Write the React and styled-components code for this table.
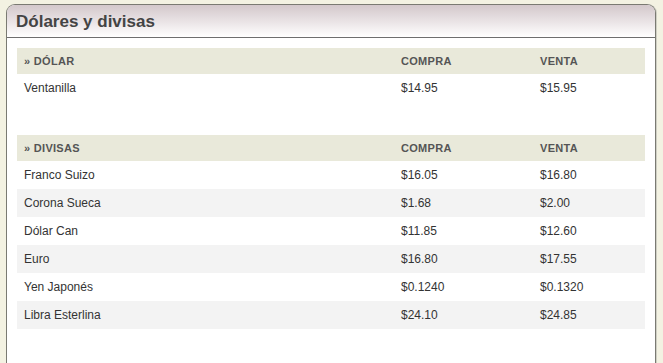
import styled, { createGlobalStyle } from "styled-components";

const GlobalStyle = createGlobalStyle`
  html, body {
    margin: 0;
    padding: 0;
    background: #f3f2e2;
    font-family: "Liberation Sans", Arial, sans-serif;
  }
`;

const dolar = [{ name: "Ventanilla", compra: "$14.95", venta: "$15.95" }];

const divisas = [
  { name: "Franco Suizo", compra: "$16.05", venta: "$16.80" },
  { name: "Corona Sueca", compra: "$1.68", venta: "$2.00" },
  { name: "Dólar Can", compra: "$11.85", venta: "$12.60" },
  { name: "Euro", compra: "$16.80", venta: "$17.55" },
  { name: "Yen Japonés", compra: "$0.1240", venta: "$0.1320" },
  { name: "Libra Esterlina", compra: "$24.10", venta: "$24.85" },
];

const RateTable = ({ title, rows }) => (
  <Table>
    <colgroup>
      <col style={{ width: 377 }} />
      <col style={{ width: 139 }} />
      <col />
    </colgroup>
    <thead>
      <tr>
        <Th>» {title}</Th>
        <Th>COMPRA</Th>
        <Th>VENTA</Th>
      </tr>
    </thead>
    <tbody>
      {rows.map((r, i) => (
        <Row key={r.name} $alt={i % 2 === 1}>
          <Td>{r.name}</Td>
          <Td>{r.compra}</Td>
          <Td>{r.venta}</Td>
        </Row>
      ))}
    </tbody>
  </Table>
);

export default function App() {
  return (
    <>
      <GlobalStyle />
      <Page>
        <Panel>
          <TitleBar>
            <Title>Dólares y divisas</Title>
          </TitleBar>
          <Body>
            <RateTable title="DÓLAR" rows={dolar} />
            <RateTable title="DIVISAS" rows={divisas} />
          </Body>
        </Panel>
      </Page>
    </>
  );
}

const Page = styled.div`
  padding: 4px 7px 0 6px;
  height: 363px;
  box-sizing: border-box;
  overflow: hidden;
`;

const Panel = styled.div`
  background: #fff;
  border: 1px solid #7a7a72;
  border-bottom: none;
  border-radius: 9px 9px 0 0;
  height: 380px;
  box-shadow: 1px 0 0 #cfcfc4;
`;

const TitleBar = styled.div`
  height: 32px;
  border-bottom: 1px solid #6e6e6e;
  border-radius: 8px 8px 0 0;
  background: linear-gradient(to bottom, #d3c8cb 0%, #ebe5e7 55%, #ffffff 100%);
  display: flex;
  align-items: center;
  padding-left: 9px;
`;

const Title = styled.h2`
  margin: 0;
  font-size: 17px;
  font-weight: bold;
  color: #444;
  padding-top: 1px;
`;

const Body = styled.div`
  padding: 10px 10px 0 10px;
  display: flex;
  flex-direction: column;
  gap: 33px;
`;

const Table = styled.table`
  width: 628px;
  border-collapse: collapse;
  table-layout: fixed;
`;

const Th = styled.th`
  background: #e9e9da;
  height: 26px;
  padding: 0 7px;
  text-align: left;
  font-size: 11px;
  font-weight: bold;
  color: #555;
  letter-spacing: 0.3px;
`;

const Row = styled.tr`
  background: ${(p) => (p.$alt ? "#f3f3f3" : "#fff")};
`;

const Td = styled.td`
  height: 28px;
  padding: 0 7px;
  font-size: 12px;
  color: #333;
`;
